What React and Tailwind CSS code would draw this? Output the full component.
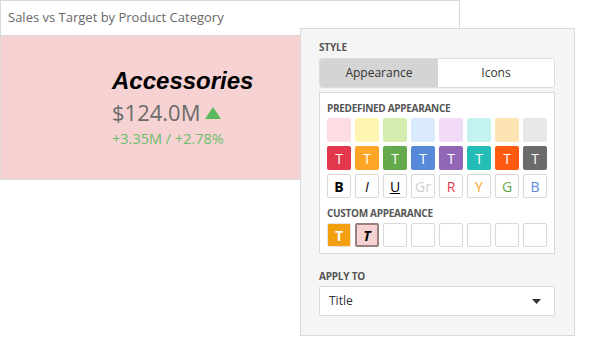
import React from "react";

const pastel = ["#fddde2", "#fff5b0", "#d4edae", "#d9ebfd", "#f2dbf6", "#c4f2ef", "#ffe4b3", "#e8e8e8"];
const solid = ["#e3384c", "#ffa526", "#64a94b", "#568ad8", "#9266b7", "#24bdb6", "#ff5a10", "#6b6b6b"];

function Cell({ children, className = "", style }) {
  return (
    <div className={"w-[24px] h-[24px] rounded-[2px] flex items-center justify-center " + className} style={style}>
      {children}
    </div>
  );
}

export default function App() {
  const font = { fontFamily: '"Open Sans", "Noto Sans", sans-serif' };
  return (
    <div className="relative w-[598px] h-[356px] bg-white overflow-hidden" style={font}>
      {/* card */}
      <div className="w-[460px] h-[180px] border border-[#d9d9d9] flex flex-col">
        <div className="h-[35px] border-b border-[#d9d9d9] flex items-center pl-[7px] text-[13px] text-[#686868] bg-white">
          Sales vs Target by Product Category
        </div>
        <div className="flex-1 bg-[#f6d3d2] pl-[111px] pt-[32px]">
          <div
            className="text-[24px] leading-[26px] font-bold italic text-black"
            style={{ fontFamily: '"Liberation Sans", Arial, sans-serif' }}
          >
            Accessories
          </div>
          <div className="flex items-center gap-[5px] mt-[3px]">
            <span className="text-[22px] leading-[30px] text-[#6b6b6b]">$124.0M</span>
            <svg width="16" height="12" viewBox="0 0 16 12" className="mt-[2px]">
              <polygon points="8,0 16,12 0,12" fill="#5cb85c" />
            </svg>
          </div>
          <div className="mt-[3px] text-[14.5px] leading-[18px] text-[#6cbd6c]">+3.35M / +2.78%</div>
        </div>
      </div>

      {/* popup panel */}
      <div className="absolute left-[300px] top-[28px] w-[275px] h-[308px] bg-[#f5f5f5] border border-[#d9d9d9] pl-[18px] pr-[19px] pt-[11px]">
        <div className="text-[10px] leading-[14px] font-bold text-[#555] tracking-[-0.2px]">STYLE</div>
        <div className="mt-[4px] h-[30px] flex rounded-[3px] border border-[#dcdcdc] overflow-hidden text-[12px] text-[#333]">
          <div className="w-[118px] bg-[#d4d4d4] flex items-center justify-center">Appearance</div>
          <div className="flex-1 bg-white flex items-center justify-center">Icons</div>
        </div>
        <div className="mt-[4px] bg-white border border-[#d9d9d9] px-[7px] pt-[8px] pb-[6px]">
          <div className="text-[10px] leading-[14px] font-bold text-[#555] tracking-[-0.3px]">PREDEFINED APPEARANCE</div>
          <div className="mt-[3px] grid grid-cols-8 gap-[4px]">
            {pastel.map((c) => (
              <Cell key={c} style={{ background: c }} />
            ))}
            {solid.map((c) => (
              <Cell key={c} style={{ background: c }} className="text-white text-[14px]">
                T
              </Cell>
            ))}
            <Cell className="border border-[#d9d9d9] font-bold text-[14px] text-black">B</Cell>
            <Cell className="border border-[#d9d9d9] italic text-[14px] text-black">I</Cell>
            <Cell className="border border-[#d9d9d9] underline text-[14px] text-black">U</Cell>
            <Cell className="border border-[#d9d9d9] text-[14px] text-[#cfcfcf]">Gr</Cell>
            <Cell className="border border-[#d9d9d9] text-[14px] text-[#e3384c]">R</Cell>
            <Cell className="border border-[#d9d9d9] text-[14px] text-[#ffa526]">Y</Cell>
            <Cell className="border border-[#d9d9d9] text-[14px] text-[#64a94b]">G</Cell>
            <Cell className="border border-[#d9d9d9] text-[14px] text-[#568ad8]">B</Cell>
          </div>
          <div className="mt-[8px] text-[10px] leading-[14px] font-bold text-[#555] tracking-[-0.3px]">CUSTOM APPEARANCE</div>
          <div className="mt-[3px] grid grid-cols-8 gap-[4px]">
            <Cell className="bg-[#f3a00f] border border-[#e5e5e5] text-white font-bold text-[14px]">T</Cell>
            <Cell className="bg-[#f6d3d2] border-2 border-[#9a7f7f] text-black font-bold italic text-[14px]">T</Cell>
            {[0, 1, 2, 3, 4, 5].map((i) => (
              <Cell key={i} className="border border-[#d9d9d9]" />
            ))}
          </div>
        </div>
        <div className="mt-[15px] text-[10px] leading-[14px] font-bold text-[#555] tracking-[-0.2px]">APPLY TO</div>
        <div className="mt-[3px] h-[30px] bg-white border border-[#d9d9d9] rounded-[2px] flex items-center justify-between pl-[9px] pr-[13px] text-[12px] text-[#333]">
          <span>Title</span>
          <svg width="9" height="5" viewBox="0 0 9 5">
            <polygon points="0,0 9,0 4.5,5" fill="#333" />
          </svg>
        </div>
      </div>
    </div>
  );
}
